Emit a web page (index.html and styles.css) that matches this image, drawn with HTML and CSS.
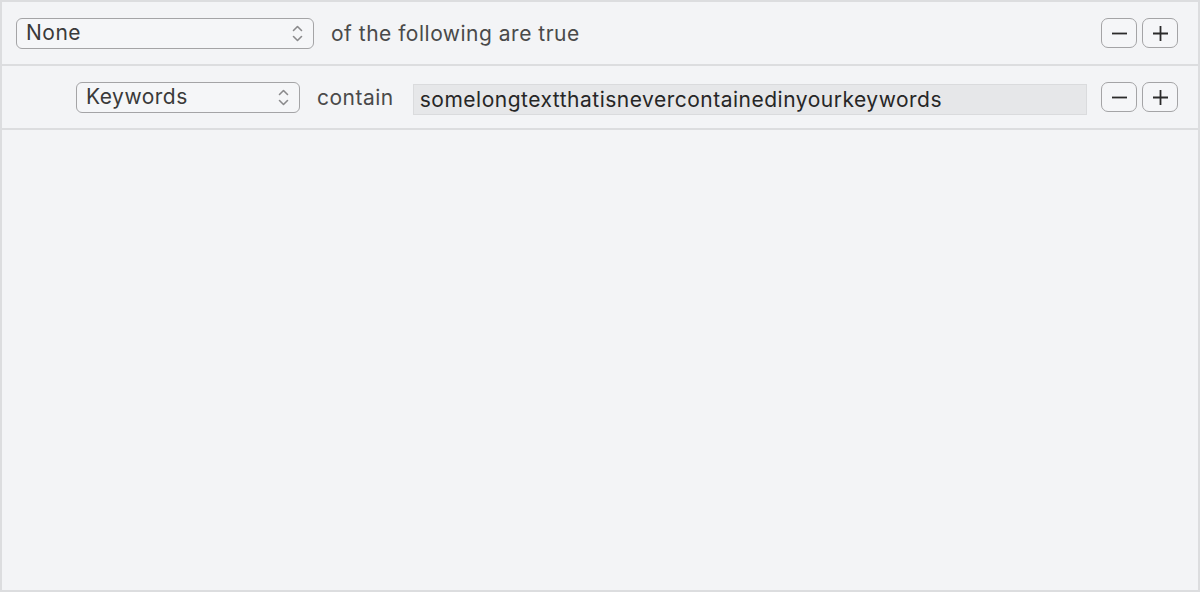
FILE: index.html
```html
<!DOCTYPE html>
<html lang="en">
<head>
<meta charset="utf-8">
<title>Rule editor</title>
<link rel="stylesheet" href="styles.css">
</head>
<body>
<div class="editor">
  <div class="row row-header">
    <div class="popup popup-match">
      <span class="popup-label">None</span>
      <svg class="popup-arrows" width="11" height="17" viewBox="0 0 11 17"><path d="M1.5 5.5 L5.5 1.5 L9.5 5.5 M1.5 11.5 L5.5 15.5 L9.5 11.5" fill="none" stroke="#8a8a8c" stroke-width="1.6" stroke-linecap="round" stroke-linejoin="round"/></svg>
    </div>
    <span class="row-text">of the following are true</span>
    <div class="spacer"></div>
    <div class="stepper">
      <button class="step-btn" type="button"><svg width="17" height="17" viewBox="0 0 17 17"><path d="M1 8.5 H16" stroke="#2b2b2b" stroke-width="1.8"/></svg></button>
      <button class="step-btn" type="button"><svg width="17" height="17" viewBox="0 0 17 17"><path d="M1 8.5 H16 M8.5 1 V16" stroke="#2b2b2b" stroke-width="1.8"/></svg></button>
    </div>
  </div>
  <div class="row row-criterion">
    <div class="popup popup-field">
      <span class="popup-label">Keywords</span>
      <svg class="popup-arrows" width="11" height="17" viewBox="0 0 11 17"><path d="M1.5 5.5 L5.5 1.5 L9.5 5.5 M1.5 11.5 L5.5 15.5 L9.5 11.5" fill="none" stroke="#8a8a8c" stroke-width="1.6" stroke-linecap="round" stroke-linejoin="round"/></svg>
    </div>
    <span class="row-text">contain</span>
    <div class="value-field">somelongtextthatisnevercontainedinyourkeywords</div>
    <div class="stepper">
      <button class="step-btn" type="button"><svg width="17" height="17" viewBox="0 0 17 17"><path d="M1 8.5 H16" stroke="#2b2b2b" stroke-width="1.8"/></svg></button>
      <button class="step-btn" type="button"><svg width="17" height="17" viewBox="0 0 17 17"><path d="M1 8.5 H16 M8.5 1 V16" stroke="#2b2b2b" stroke-width="1.8"/></svg></button>
    </div>
  </div>
</div>
</body>
</html>
```

FILE: styles.css
```css
html, body {
  margin: 0;
  padding: 0;
}

body {
  font-family: Inter, "Noto Sans", "Liberation Sans", sans-serif;
  font-size: 21px;
  letter-spacing: 0.5px;
  color: #333;
}

.editor {
  box-sizing: border-box;
  width: 1200px;
  height: 592px;
  background: #f3f4f6;
  border: 2px solid #dcdddf;
}

.row {
  display: flex;
  align-items: center;
  height: 62px;
  border-bottom: 2px solid #dcdddf;
  padding-right: 20px;
}

.row-header {
  padding-left: 14px;
}

.row-criterion {
  padding-left: 74px;
}

.popup {
  box-sizing: border-box;
  display: flex;
  align-items: center;
  height: 31px;
  border: 1.5px solid #a4a4a6;
  border-radius: 6px;
  padding: 0 10px 0 9px;
  background: #f5f6f8;
}

.popup-match {
  width: 298px;
}

.popup-field {
  width: 224px;
}

.popup-label {
  flex: 1;
  color: #3a3a3a;
  line-height: 1;
  position: relative;
  top: -1px;
}

.popup-arrows {
  display: block;
}

.row-text {
  margin-left: 17px;
  color: #4a4a4a;
  line-height: 1;
}

.spacer {
  flex: 1;
}

.value-field {
  box-sizing: border-box;
  flex: 1;
  height: 31px;
  margin-left: 19px;
  margin-top: 5px;
  padding: 0 6px;
  display: flex;
  align-items: center;
  background: #e6e7e9;
  border: 1px solid #dadbdd;
  color: #262626;
  white-space: nowrap;
  overflow: hidden;
}

.stepper {
  display: flex;
  gap: 5px;
  margin-left: 14px;
}

.step-btn {
  box-sizing: border-box;
  width: 36px;
  height: 30px;
  padding: 0;
  display: flex;
  align-items: center;
  justify-content: center;
  background: #f5f6f8;
  border: 1.5px solid #a4a4a6;
  border-radius: 7px;
}

.step-btn svg {
  display: block;
}
```
